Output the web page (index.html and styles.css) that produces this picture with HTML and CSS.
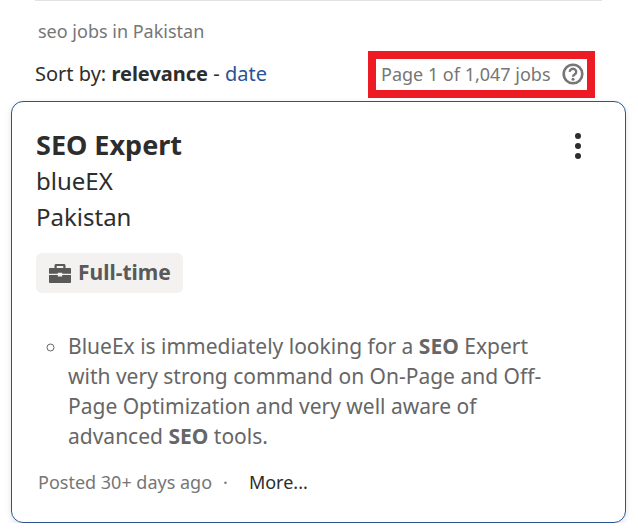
FILE: index.html
```html
<!DOCTYPE html>
<html lang="en">
<head>
  <meta charset="UTF-8">
  <title>seo jobs in Pakistan</title>
  <link rel="stylesheet" href="styles.css">
</head>
<body>
  <div class="top-rule"></div>
  <div class="query">seo jobs in Pakistan</div>

  <div class="sort-row">
    <div class="sort">Sort by: <strong>relevance</strong> - <a href="#">date</a></div>
    <div class="page-count">
      Page 1 of 1,047 jobs
      <svg class="help-icon" width="22" height="22" viewBox="0 0 22 22">
        <circle cx="11" cy="11" r="9.300" fill="none" stroke="#767676" stroke-width="2.600"/>
        <path d="M7.800 8.900a3.200 3 0 1 1 5 2.400c-1.200.8-1.800 1.200-1.800 2.400" fill="none" stroke="#767676" stroke-width="2.400"/>
        <circle cx="11" cy="16.300" r="1.500" fill="#767676"/>
      </svg>
    </div>
  </div>

  <div class="job-card">
    <div class="title-row">
      <h2>SEO Expert</h2>
      <div class="menu-dots"><span></span><span></span><span></span></div>
    </div>
    <div class="company">blueEX</div>
    <div class="location">Pakistan</div>
    <div class="tag">
      <svg width="22" height="19" viewBox="0 0 22 19">
        <path d="M5.500 4.500V1.500C5.500.7 6.200 0 7 0h8c.8 0 1.500.7 1.500 1.500v3h-2.200V2H7.700v2.500z" fill="#595959"/>
        <path d="M1 4h20c.6 0 1 .4 1 1v4.800H13.200V8.800H8.800v1H0V5c0-.6.4-1 1-1z" fill="#595959"/>
        <path d="M0 11h8.800v1.400h4.400V11H22v7c0 .6-.4 1-1 1H1c-.6 0-1-.4-1-1z" fill="#595959"/>
      </svg>
      <span class="tag-label">Full-time</span>
    </div>
    <ul class="snippet">
      <li>BlueEx is immediately looking for a <b>SEO</b> Expert with very strong command on On-Page and Off-Page Optimization and very well aware of advanced <b>SEO</b> tools.</li>
    </ul>
    <div class="card-footer">
      <span class="posted">Posted 30+ days ago</span>
      <span class="sep">·</span>
      <a class="more" href="#">More...</a>
    </div>
  </div>
</body>
</html>
```

FILE: styles.css
```css
html {
  height: 100%;
  overflow: hidden;
}

body {
  font-family: "Noto Sans", sans-serif;
  background: #ffffff;
  color: #2d2d2d;
  margin: 0;
  padding: 0 12px 0 11px;
}

.top-rule {
  height: 1px;
  background: #e4e2e0;
  margin: 0 24px 0 24px;
}

.query {
  font-size: 18px;
  line-height: 24px;
  color: #767676;
  margin: 18px 0 0 27px;
}

.sort-row {
  display: flex;
  justify-content: space-between;
  align-items: flex-start;
  margin-top: 8px;
  height: 50px;
}

.sort {
  font-size: 20px;
  line-height: 26px;
  margin-left: 24px;
  margin-top: 10px;
}

.sort a {
  color: #2a5396;
  text-decoration: none;
}

.page-count {
  display: flex;
  align-items: center;
  box-sizing: border-box;
  height: 47px;
  width: 227px;
  margin-right: 31px;
  padding: 0 0 2px 5px;
  border: 8px solid #ed1c24;
  font-size: 18px;
  color: #767676;
  white-space: nowrap;
}

.help-icon {
  flex: none;
  margin-left: 11px;
}

.job-card {
  box-sizing: border-box;
  height: 422px;
  border: 1px solid #2a5396;
  border-radius: 12px;
  padding: 24px 24px 0 24px;
  box-shadow: 0 2px 6px rgba(0, 0, 0, 0.12);
}

.title-row {
  display: flex;
  justify-content: space-between;
}

h2 {
  margin: 0;
  font-size: 27px;
  line-height: 37px;
  font-weight: 700;
}

.menu-dots {
  display: flex;
  flex-direction: column;
  gap: 4px;
  margin: 7px 20px 0 0;
}

.menu-dots span {
  width: 6px;
  height: 6px;
  border-radius: 50%;
  background: #2d2d2d;
}

.company, .location {
  font-size: 24px;
  line-height: 36px;
}

.tag {
  display: inline-flex;
  align-items: center;
  gap: 7px;
  margin-top: 18px;
  height: 40px;
  padding: 0 12px 0 13px;
  background: #f3f2f1;
  border-radius: 6px;
  font-size: 21px;
  font-weight: 700;
  color: #595959;
}

.tag-label {
  margin-bottom: 2px;
}

.snippet {
  list-style: circle;
  margin: 38px 0 0 0;
  padding: 0 50px 0 32px;
  font-size: 21px;
  line-height: 30px;
  color: #666666;
}

.card-footer {
  display: flex;
  align-items: center;
  margin: 19px 0 0 2px;
  font-size: 18px;
}

.posted {
  color: #767676;
}

.sep {
  color: #767676;
  margin: 0 21px 0 11px;
}

.more {
  color: #2d2d2d;
  text-decoration: none;
}
```
